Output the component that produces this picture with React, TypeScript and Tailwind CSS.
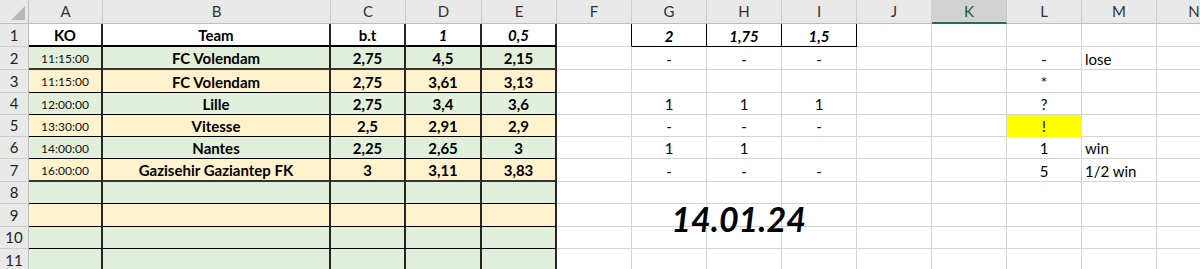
import React from "react"

type Kind = "head" | "headItalic" | "time" | "team" | "num" | "plain" | "left" | "bang"

type Cell = { v: string; kind: Kind }

const letters = ["A", "B", "C", "D", "E", "F", "G", "H", "I", "J", "K", "L", "M", "N"]

// sheet content, keyed by row number then column letter
const sheet: Record<number, Record<string, Cell>> = {
  1: {
    A: { v: "KO", kind: "head" },
    B: { v: "Team", kind: "head" },
    C: { v: "b.t", kind: "head" },
    D: { v: "1", kind: "headItalic" },
    E: { v: "0,5", kind: "headItalic" },
    G: { v: "2", kind: "headItalic" },
    H: { v: "1,75", kind: "headItalic" },
    I: { v: "1,5", kind: "headItalic" },
  },
  2: {
    A: { v: "11:15:00", kind: "time" },
    B: { v: "FC Volendam", kind: "team" },
    C: { v: "2,75", kind: "num" },
    D: { v: "4,5", kind: "num" },
    E: { v: "2,15", kind: "num" },
    G: { v: "-", kind: "plain" },
    H: { v: "-", kind: "plain" },
    I: { v: "-", kind: "plain" },
    L: { v: "-", kind: "plain" },
    M: { v: "lose", kind: "left" },
  },
  3: {
    A: { v: "11:15:00", kind: "time" },
    B: { v: "FC Volendam", kind: "team" },
    C: { v: "2,75", kind: "num" },
    D: { v: "3,61", kind: "num" },
    E: { v: "3,13", kind: "num" },
    L: { v: "*", kind: "plain" },
  },
  4: {
    A: { v: "12:00:00", kind: "time" },
    B: { v: "Lille", kind: "team" },
    C: { v: "2,75", kind: "num" },
    D: { v: "3,4", kind: "num" },
    E: { v: "3,6", kind: "num" },
    G: { v: "1", kind: "plain" },
    H: { v: "1", kind: "plain" },
    I: { v: "1", kind: "plain" },
    L: { v: "?", kind: "plain" },
  },
  5: {
    A: { v: "13:30:00", kind: "time" },
    B: { v: "Vitesse", kind: "team" },
    C: { v: "2,5", kind: "num" },
    D: { v: "2,91", kind: "num" },
    E: { v: "2,9", kind: "num" },
    G: { v: "-", kind: "plain" },
    H: { v: "-", kind: "plain" },
    I: { v: "-", kind: "plain" },
    L: { v: "!", kind: "bang" },
  },
  6: {
    A: { v: "14:00:00", kind: "time" },
    B: { v: "Nantes", kind: "team" },
    C: { v: "2,25", kind: "num" },
    D: { v: "2,65", kind: "num" },
    E: { v: "3", kind: "num" },
    G: { v: "1", kind: "plain" },
    H: { v: "1", kind: "plain" },
    L: { v: "1", kind: "plain" },
    M: { v: "win", kind: "left" },
  },
  7: {
    A: { v: "16:00:00", kind: "time" },
    B: { v: "Gazisehir Gaziantep FK", kind: "team" },
    C: { v: "3", kind: "num" },
    D: { v: "3,11", kind: "num" },
    E: { v: "3,83", kind: "num" },
    G: { v: "-", kind: "plain" },
    H: { v: "-", kind: "plain" },
    I: { v: "-", kind: "plain" },
    L: { v: "5", kind: "plain" },
    M: { v: "1/2 win", kind: "left" },
  },
}

const rows = [1, 2, 3, 4, 5, 6, 7, 8, 9, 10, 11]
const yellowRows = [3, 5, 7, 9]

function textClass(kind: Kind) {
  switch (kind) {
    case "head":
      return "justify-center font-bold text-[15px] text-black"
    case "headItalic":
      return "justify-center font-bold italic text-[15px] text-black"
    case "time":
      return "justify-center text-[12px] text-[#111]"
    case "team":
    case "num":
      return "justify-center font-bold text-[15px] text-black"
    case "left":
      return "justify-start pl-[3px] text-[15px] text-black"
    default:
      return "justify-center text-[15px] text-black"
  }
}

function cellClass(row: number, col: string) {
  const inTable = ["A", "B", "C", "D", "E"].includes(col)
  const topBox = row === 1 && ["G", "H", "I"].includes(col)

  if (inTable) {
    const fill = row === 1 ? "bg-white" : yellowRows.includes(row) ? "bg-[#fff2cc]" : "bg-[#e2efda]"
    const bottom =
      row === 1
        ? "border-b-2 border-b-black"
        : row === 2 || row === 7
          ? "border-b-2 border-b-[#333]"
          : "border-b border-b-black"
    return `${fill} ${bottom} border-r-2 border-r-[#262626]`
  }
  if (topBox) return "bg-white border-r border-b border-black"
  if (row === 1 && col === "F") return "bg-white border-r border-r-black border-b border-b-[#d4d4d4]"
  if (row === 5 && col === "L") return "bg-[#ffff00] border-r border-b border-[#ffff00]"
  return "bg-white border-r border-b border-[#d4d4d4]"
}

function ColumnHeader({ letter }: { letter: string }) {
  if (letter === "K") {
    return (
      <div className="flex items-center justify-center bg-[#d2d2d2] border-r border-r-[#c4c4c4] border-b-2 border-b-[#217346] text-[15px] text-[#185c37]">
        {letter}
      </div>
    )
  }
  return (
    <div className="flex items-center justify-center bg-[#e9e9e9] border-r border-r-[#cdcdcd] border-b border-b-[#bdbdbd] text-[15px] text-[#333]">
      {letter}
    </div>
  )
}

export default function App() {
  return (
    <div className="w-[1200px] h-[269px] overflow-hidden bg-white" style={{ fontFamily: "Lato, 'Open Sans', sans-serif" }}>
      <div className="grid grid-cols-[29px_74px_228px_75px_76px_75px_75px_75px_75px_75px_75px_75px_75px_75px_75px] grid-rows-[24px_23px_23px_23px_22px_22px_22px_23px_22px_23px_22px_23px]">
        {/* corner select-all box */}
        <div className="flex items-end justify-end bg-[#e9e9e9] border-r border-b border-[#bdbdbd] pr-[3px] pb-[3px]">
          <svg width="14" height="14" viewBox="0 0 14 14">
            <polygon points="14,0 14,14 0,14" fill="#b9b9b9" />
          </svg>
        </div>
        {letters.map((l) => (
          <ColumnHeader key={l} letter={l} />
        ))}

        {rows.map((r) => (
          <React.Fragment key={r}>
            <div className="flex items-center justify-center bg-[#e9e9e9] border-r border-r-[#bdbdbd] border-b border-b-[#cdcdcd] text-[15px] text-[#222]">
              {r}
            </div>
            {letters.map((c) => {
              const cell = sheet[r]?.[c]
              const overflowDate = r === 9 && c === "H"
              return (
                <div key={c} className={`relative flex items-center ${overflowDate ? "z-10" : ""} ${cellClass(r, c)}`}>
                  {cell && (
                    <span className={`flex w-full pt-[2px] whitespace-nowrap ${textClass(cell.kind)}`}>{cell.v}</span>
                  )}
                  {overflowDate && (
                    <span className="absolute left-1/2 top-[-2px] -translate-x-[54%] whitespace-nowrap font-bold italic text-[34px] leading-none text-black">
                      14.01.24
                    </span>
                  )}
                </div>
              )
            })}
          </React.Fragment>
        ))}
      </div>
    </div>
  )
}
